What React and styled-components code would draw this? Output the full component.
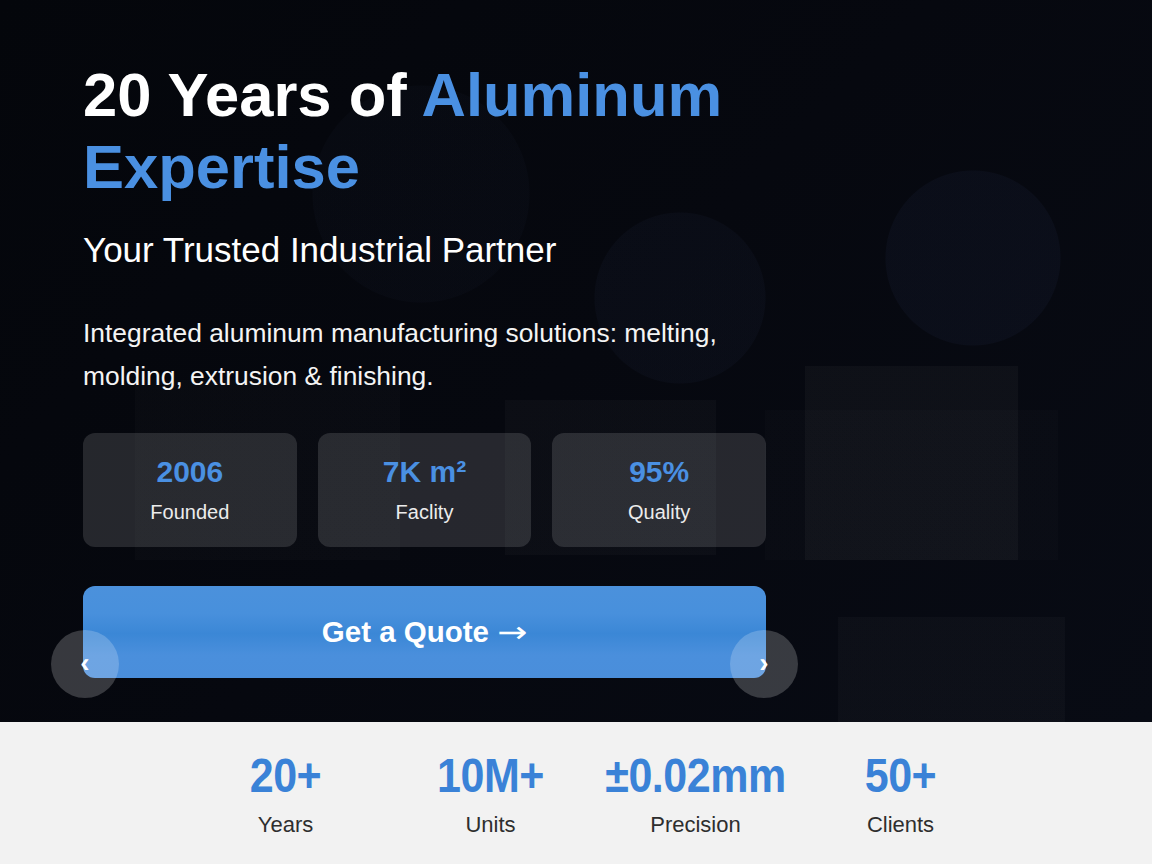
import React from "react";
import styled, { createGlobalStyle } from "styled-components";

const GlobalStyle = createGlobalStyle`
  * { box-sizing: border-box; }
  html, body { margin: 0; padding: 0; }
  body {
    background: #f2f2f2;
    font-family: "Liberation Sans", Arial, Helvetica, sans-serif;
  }
`;

const circle = (x, y, r, c) =>
  `radial-gradient(circle at ${x}px ${y}px, ${c} ${r}px, transparent ${r + 1}px)`;
const rect = (x, y, w, h, c) =>
  `linear-gradient(${c}, ${c}) ${x}px ${y}px / ${w}px ${h}px no-repeat`;

const Hero = styled.section`
  height: 722px;
  padding: 59px 0 0 83px;
  background:
    ${circle(421, 194, 108, "rgba(80,100,150,0.035)")},
    ${circle(680, 298, 85, "rgba(80,100,160,0.05)")},
    ${circle(973, 258, 87, "rgba(80,100,170,0.06)")},
    ${rect(805, 366, 213, 194, "rgba(255,255,255,0.032)")},
    ${rect(765, 410, 293, 150, "rgba(255,255,255,0.012)")},
    ${rect(838, 617, 227, 105, "rgba(255,255,255,0.022)")},
    ${rect(505, 400, 211, 155, "rgba(255,255,255,0.022)")},
    ${rect(135, 380, 265, 180, "rgba(255,255,255,0.015)")},
    linear-gradient(135deg, #04060b 0%, #06080f 50%, #080b14 100%);
`;

const Content = styled.div`
  position: relative;
  width: 683px;
  display: flex;
  flex-direction: column;
`;

const Title = styled.h1`
  margin: 0;
  font-size: 61.5px;
  line-height: 72px;
  font-weight: 700;
  color: #ffffff;
`;

const Accent = styled.span`
  color: #4a90e2;
`;

const Subtitle = styled.h2`
  margin: 26px 0 0;
  font-size: 35px;
  line-height: 42px;
  font-weight: 400;
  color: #ffffff;
`;

const Lead = styled.p`
  margin: 41px 0 0;
  font-size: 26.4px;
  line-height: 43px;
  color: #f4f4f4;
`;

const StatGrid = styled.div`
  margin-top: 35px;
  display: grid;
  grid-template-columns: repeat(3, 1fr);
  gap: 21px;
`;

const StatCard = styled.div`
  height: 114px;
  padding-top: 21px;
  border-radius: 12px;
  background: rgba(255, 255, 255, 0.13);
  display: flex;
  flex-direction: column;
  align-items: center;
  gap: 10px;
`;

const StatValue = styled.div`
  font-size: 30px;
  line-height: 36px;
  font-weight: 700;
  color: #4a90e2;
`;

const StatLabel = styled.div`
  font-size: 20px;
  line-height: 24px;
  color: #ececec;
`;

const QuoteButton = styled.button`
  margin-top: 39px;
  height: 92px;
  border: none;
  border-radius: 12px;
  background: linear-gradient(
    180deg,
    #4b91dc 0%,
    #4890dc 30%,
    #3b87d6 52%,
    #4a8fdc 75%,
    #4a8edb 100%
  );
  color: #ffffff;
  font-family: inherit;
  font-size: 29.5px;
  font-weight: 700;
  cursor: pointer;
  display: flex;
  align-items: center;
  justify-content: center;
  gap: 8px;
`;

const ButtonArrow = styled.span`
  font-family: "DejaVu Sans", sans-serif;
  font-size: 36px;
  font-weight: 400;
  line-height: 1;
  transform: scaleY(0.8);
`;

const NavArrow = styled.button`
  position: absolute;
  bottom: -20px;
  ${(p) => (p.$side === "left" ? "left: -32px;" : "right: -32px;")}
  width: 68px;
  height: 68px;
  border: none;
  border-radius: 50%;
  background: rgba(255, 255, 255, 0.2);
  color: #ffffff;
  font-family: inherit;
  font-size: 28px;
  font-weight: 700;
  line-height: 1;
  display: flex;
  align-items: center;
  justify-content: center;
  padding: 0 0 2px;
  cursor: pointer;
`;

const Metrics = styled.section`
  background: #f2f2f2;
  padding: 27px 0 40px 34px;
  display: grid;
  grid-template-columns: repeat(4, 205px);
  justify-content: center;
`;

const Metric = styled.div`
  display: flex;
  flex-direction: column;
  align-items: center;
  gap: 11px;
`;

const MetricValue = styled.div`
  font-size: 43px;
  line-height: 52px;
  font-weight: 700;
  color: #3a82d7;
  letter-spacing: -0.5px;
  transform: scaleY(1.1);
`;

const MetricLabel = styled.div`
  font-size: 22px;
  line-height: 26px;
  color: #2e2e2e;
`;

const stats = [
  { value: "2006", label: "Founded" },
  { value: "7K m²", label: "Faclity" },
  { value: "95%", label: "Quality" },
];

const metrics = [
  { value: "20+", label: "Years" },
  { value: "10M+", label: "Units" },
  { value: "±0.02mm", label: "Precision" },
  { value: "50+", label: "Clients" },
];

export default function App() {
  return (
    <>
      <GlobalStyle />
      <Hero>
        <Content>
          <Title>
            20 Years of <Accent>Aluminum Expertise</Accent>
          </Title>
          <Subtitle>Your Trusted Industrial Partner</Subtitle>
          <Lead>
            Integrated aluminum manufacturing solutions: melting, molding,
            extrusion &amp; finishing.
          </Lead>
          <StatGrid>
            {stats.map((s) => (
              <StatCard key={s.label}>
                <StatValue>{s.value}</StatValue>
                <StatLabel>{s.label}</StatLabel>
              </StatCard>
            ))}
          </StatGrid>
          <QuoteButton>
            Get a Quote <ButtonArrow>→</ButtonArrow>
          </QuoteButton>
          <NavArrow $side="left" aria-label="Previous">‹</NavArrow>
          <NavArrow $side="right" aria-label="Next">›</NavArrow>
        </Content>
      </Hero>
      <Metrics>
        {metrics.map((m) => (
          <Metric key={m.label}>
            <MetricValue>{m.value}</MetricValue>
            <MetricLabel>{m.label}</MetricLabel>
          </Metric>
        ))}
      </Metrics>
    </>
  );
}
